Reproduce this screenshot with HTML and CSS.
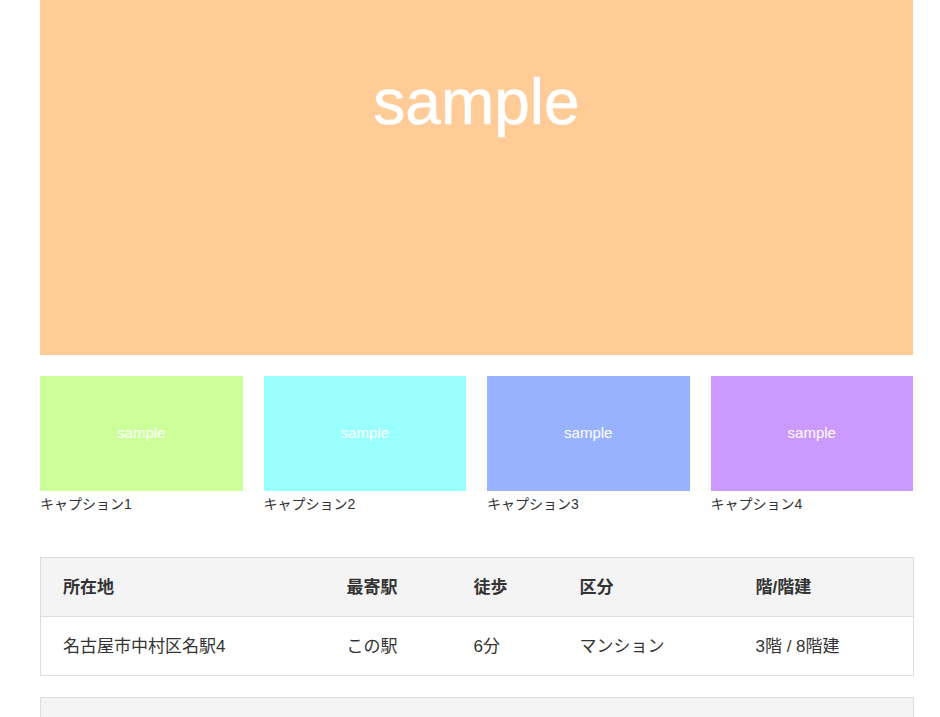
FILE: index.html
```html
<!DOCTYPE html>
<html lang="ja">
<head>
<meta charset="utf-8">
<title>物件詳細</title>
<link rel="stylesheet" href="styles.css">
</head>
<body>
<main class="page">
  <div class="hero"><span class="hero-text">sample</span></div>
  <ul class="thumbs">
    <li class="thumb"><div class="thumb-img green"><span>sample</span></div><p class="caption">キャプション1</p></li>
    <li class="thumb"><div class="thumb-img cyan"><span>sample</span></div><p class="caption">キャプション2</p></li>
    <li class="thumb"><div class="thumb-img blue"><span>sample</span></div><p class="caption">キャプション3</p></li>
    <li class="thumb"><div class="thumb-img purple"><span>sample</span></div><p class="caption">キャプション4</p></li>
  </ul>
  <table class="spec">
    <thead>
      <tr><th class="c1">所在地</th><th class="c2">最寄駅</th><th class="c3">徒歩</th><th class="c4">区分</th><th class="c5">階/階建</th></tr>
    </thead>
    <tbody>
      <tr><td>名古屋市中村区名駅4</td><td>この駅</td><td>6分</td><td>マンション</td><td>3階 / 8階建</td></tr>
    </tbody>
  </table>
  <table class="spec">
    <thead>
      <tr><th class="c1">間取り</th><th class="c2">専有面積</th><th class="c3">築年</th><th class="c4">価格</th><th class="c5">管理費</th></tr>
    </thead>
    <tbody>
      <tr><td>2LDK</td><td>60㎡</td><td>2010年</td><td>3,000万円</td><td>1万円</td></tr>
    </tbody>
  </table>
</main>
</body>
</html>
```
FILE: styles.css
```css
html, body {
  margin: 0;
  padding: 0;
  background: #fff;
}
body {
  font-family: "Liberation Sans", "Noto Sans CJK JP", sans-serif;
  color: #333;
}
.page {
  margin: 0 27px 0 40px;
  width: 873px;
}
.hero {
  height: 355px;
  background: #ffcb97;
  display: flex;
  justify-content: center;
  align-items: flex-start;
  padding-top: 70px;
  box-sizing: border-box;
}
.hero-text {
  color: #fff;
  font-family: "Liberation Sans", sans-serif;
  font-size: 64px;
  line-height: 1;
  -webkit-text-stroke: 0.6px #fff;
}
.thumbs {
  list-style: none;
  margin: 21px 0 0;
  padding: 0;
  display: grid;
  grid-template-columns: repeat(4, 1fr);
  column-gap: 21px;
}
.thumb-img {
  height: 115px;
  display: flex;
  align-items: center;
  justify-content: center;
  color: #fff;
  font-size: 15px;
  font-family: "Liberation Sans", sans-serif;
  padding-bottom: 3px;
  box-sizing: border-box;
}
.green { background: #ccff99; }
.cyan { background: #99ffff; }
.blue { background: #99b2ff; }
.purple { background: #cc99ff; }
.caption {
  margin: 3px 0 0;
  font-size: 14px;
  line-height: 20px;
  color: #333;
}
.spec {
  width: 873px;
  border-collapse: collapse;
  margin-top: 21px;
  table-layout: fixed;
  font-size: 17px;
}
.thumbs + .spec {
  margin-top: 43px;
}
.spec th, .spec td {
  box-sizing: border-box;
  border-top: 1px solid #ddd;
  border-bottom: 1px solid #ddd;
  padding: 19px 22px 17px;
  line-height: 22px;
  text-align: left;
  color: #333;
}
.spec th:first-child, .spec td:first-child { border-left: 1px solid #ddd; }
.spec th:last-child, .spec td:last-child { border-right: 1px solid #ddd; }
.spec th {
  background: #f4f4f4;
  font-weight: bold;
}
.c1 { width: 284px; }
.c2 { width: 127px; }
.c3 { width: 106px; }
.c4 { width: 176px; }
.c5 { width: 180px; }
```
